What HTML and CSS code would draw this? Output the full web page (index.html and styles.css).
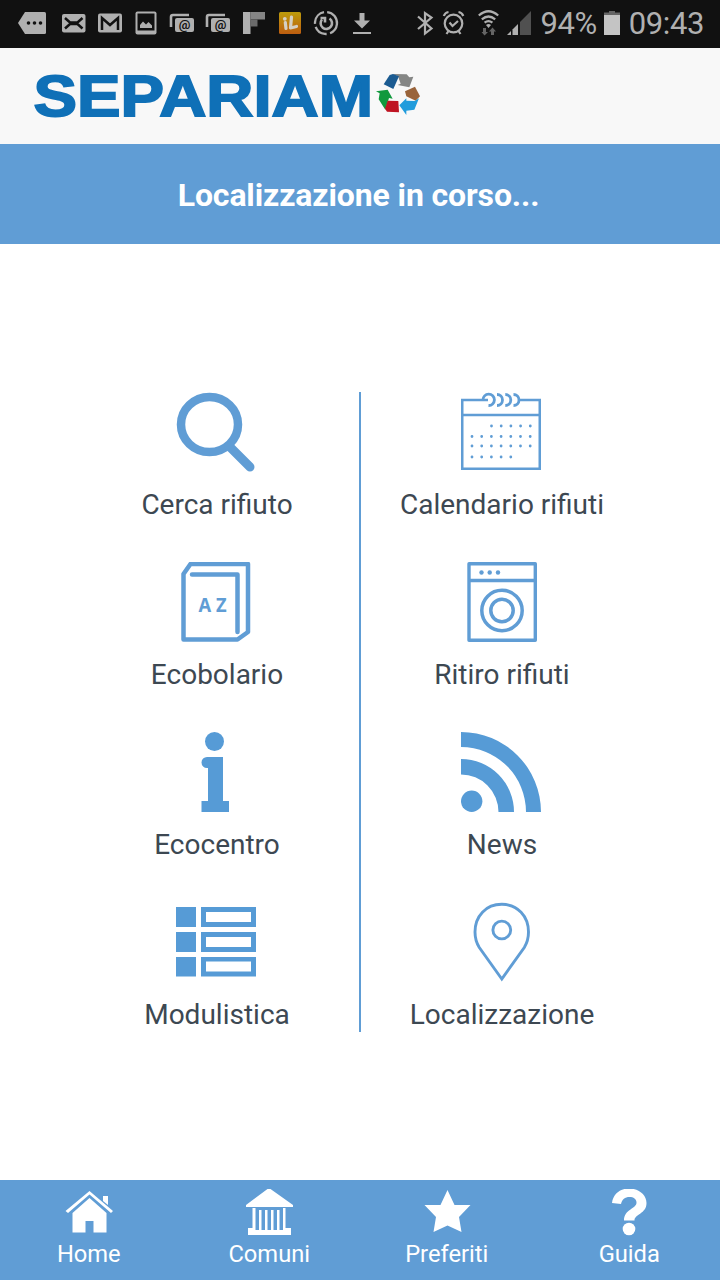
FILE: index.html
```html
<!DOCTYPE html>
<html lang="it">
<head>
  <meta charset="UTF-8" />
  <meta name="viewport" content="width=device-width, initial-scale=1.0" />
  <title>Separiamo</title>
  <link rel="stylesheet" href="styles.css">
</head>
<body>
  <div class="status-bar">
    <div class="notifications">
      <svg viewBox="0 0 36 48"><path d="M5 12H24.500Q26 12 26 13.500V32.500Q26 34 24.500 34H5L-2 23Z"/><g class="dark"><circle cx="8.500" cy="23" r="1.800"/><circle cx="14.500" cy="23" r="1.800"/><circle cx="20.500" cy="23" r="1.800"/></g></svg>
      <svg viewBox="0 0 36 48"><rect x="6" y="14" width="23.500" height="18.500" rx="2"/><path class="dark-line" d="M9 18L14 22.500H21.500L26.500 18M9 28.500L14 24H21.500L26.500 28.500"/></svg>
      <svg viewBox="0 0 36 48"><rect x="6" y="13.500" width="24" height="19" rx="2"/><path class="dark-line" d="M10 30V18L18 25L26 18V30"/></svg>
      <svg viewBox="0 0 36 48"><rect x="7.500" y="11.500" width="21" height="23" rx="2"/><rect class="dark" x="9.500" y="13.500" width="17" height="17"/><path d="M12 28V25L15 21.500L18 24.500L20.500 22L24 25.500V28Z"/></svg>
      <svg viewBox="0 0 36 48"><path class="line" d="M7 27V17Q7 15 9 15H25"/><rect x="11" y="18" width="19" height="14" rx="2"/><text class="at" x="20.500" y="29">@</text></svg>
      <svg viewBox="0 0 36 48"><path class="line" d="M7 27V17Q7 15 9 15H25"/><rect x="11" y="18" width="19" height="14" rx="2"/><text class="at" x="20.500" y="29">@</text></svg>
      <svg viewBox="0 0 36 48"><path d="M7 12H14.500V34H7Z"/><path fill="#858585" d="M14.500 12H29V19.500H14.500Z"/><path fill="#6b6b6b" d="M14.500 19.500H21.500V26.500H14.500Z"/></svg>
      <svg viewBox="0 0 36 48">
        <defs><linearGradient id="gold" x2="0" y2="1"><stop stop-color="#bd9c0c"/><stop offset="1" stop-color="#bd5d10"/></linearGradient></defs>
        <rect x="7" y="12" width="22" height="22" rx="1.500" fill="url(#gold)"/>
        <path class="il" d="M13.300 22.500L14 28.500M19.500 17L18.500 28L24.500 26.500"/><circle cx="12.800" cy="18.800" r="1.900" fill="#d5d0c5"/>
      </svg>
      <svg viewBox="0 0 36 48"><circle class="line thin" cx="18" cy="23" r="11" stroke-dasharray="29 3.500 14 3 16 3.620" transform="rotate(-84 18 23)"/><path class="line" d="M21.500 18.500A5.700 5.700 0 1 1 14 19.500M12.500 18H17V22.500"/></svg>
      <svg viewBox="0 0 36 48"><path d="M15.500 13H20.500V20.500H26L18 28.500L10 20.500H15.500ZM9 32H27V34H9Z"/></svg>
    </div>
    <div class="system">
      <svg class="bluetooth" viewBox="0 0 16 48"><path class="line mid" d="M1 16.500L14.500 28.500L8 33.500V13L14.500 17.500L1 29"/></svg>
      <svg class="alarm" viewBox="0 0 22 48"><circle class="line mid" cx="10.500" cy="23.500" r="8.800"/><path class="line mid" d="M6.500 22.500L9.500 26L15 21M0.800 16Q2 12.500 5.500 12M15.500 12Q19 12.500 20.300 16M5.500 31L3.500 34M15.500 31L17.500 34"/></svg>
      <svg class="wifi" viewBox="0 0 22 48"><path class="line mid" d="M.8 15.500Q10.500 7 20.200 15.500M3.800 19.300Q10.500 13.700 17.200 19.300M6.600 22.700Q10.500 19.500 14.400 22.700"/><path d="M8 25Q10.500 23 13 25L10.500 28Z"/><path fill="#656565" d="M5 28H8V32H10L6.500 35.500L3.500 32H5ZM13 35V31.500H11L14.500 27.500L18 31.500H16V35Z"/></svg>
      <svg class="signal" viewBox="0 0 24 48"><path d="M0 35L4 31V35Z"/><path d="M5.500 35V29.500L11 24V35Z"/><path fill="#505050" d="M13 35V22L24 11V35Z"/></svg>
      <span class="percent">94%</span>
      <svg class="battery" viewBox="0 0 16 48"><path fill="#656565" d="M5 11H11V12.500H16V15H0V12.500H5Z"/><path fill="#c4c4c4" d="M0 15H16V35H0Z"/></svg>
      <span>09:43</span>
    </div>
  </div>

  <header class="header">
    <svg class="logo" viewBox="0 0 390 70" role="img" aria-label="Separiamo">
      <text class="logo-text" x="3.500" y="51" textLength="339.500" lengthAdjust="spacingAndGlyphs">SEPARIAM</text>
      <g transform="translate(335 -1) scale(.3333)">
        <path fill="#858685" d="M82 30L125 31L133 40L145 38L133 70L98 63L107 59L99 37Z"/>
        <path fill="#1b5b91" d="M74 33L84 30L102 37L85 75L56 61Z"/>
        <path fill="#99643b" d="M120 82L150 68L165 97L152 110L124 97Z"/>
        <path fill="#219cdc" d="M103 124L124 103V110L149 111L162 103L148 137L124 140V153Z"/>
        <path fill="#11993d" d="M33 82L68 77L83 104L72 102L61 137L41 106L44 88Z"/>
        <path fill="#bf1422" d="M68 110L100 111L102 145L66 143L60 134Z"/>
      </g>
    </svg>
  </header>

  <div class="banner">Localizzazione in corso...</div>

  <main class="menu">
    <div class="column left">
      <a class="item">
        <svg class="icon" viewBox="0 0 80 80"><ellipse cx="33.500" cy="32.500" rx="28.500" ry="27.500" stroke-width="8.500"/><path d="M53 54L74 75" stroke-width="9" stroke-linecap="round"/></svg>
        <span>Cerca rifiuto</span>
      </a>
      <a class="item">
        <svg class="icon" viewBox="0 0 80 80"><path d="M14.500 2H72V70L61.500 77.500H7.500V12Z" stroke-width="4.500" stroke-linejoin="round"/><path d="M16 12.500H61.500V70" stroke-width="4.500" stroke-linecap="round" stroke-linejoin="round"/><text class="az" x="22.500" y="50" textLength="28" lengthAdjust="spacingAndGlyphs">A Z</text></svg>
        <span>Ecobolario</span>
      </a>
      <a class="item">
        <svg class="icon solid" viewBox="0 0 80 80"><circle cx="38.500" cy="9.500" r="9.500"/><path d="M31 25H47V69H53V80H25.500V69H32V36H31A5.500 5.500 0 0 1 31 25Z"/></svg>
        <span>Ecocentro</span>
      </a>
      <a class="item">
        <svg class="icon solid" viewBox="0 0 80 80"><path d="M0 5H20V25H0ZM0 30H20V50H0ZM0 55H20V74.500H0Z"/><g fill-rule="evenodd"><path d="M25 5H80V25H25ZM30 10V20H75V10Z"/><path d="M25 30H80V50H25ZM30 35V45H75V35Z"/><path d="M25 55H80V74.500H25ZM30 59.500V69.500H75V59.500Z"/></g></svg>
        <span>Modulistica</span>
      </a>
    </div>
    <div class="column right">
      <a class="item">
        <svg class="icon" viewBox="0 0 80 80">
          <path d="M22 8H1.200V76.800H78.800V8H58M1 23H79M22 8H27" stroke-width="2.600"/>
          <path d="M22 8A5.700 5.700 0 1 1 27.500 13.500M36 2.500A5.500 5.500 0 1 1 36 13.500M44.300 2.500A5.500 5.500 0 1 1 44.300 13.500M52.500 2.500A5.500 5.500 0 1 1 52.500 13.500" stroke-width="2.800"/>
          <path class="dots" d="M30.500 34H71M11 44.500H71M11 54H71M11 65H51"/>
        </svg>
        <span>Calendario rifiuti</span>
      </a>
      <a class="item">
        <svg class="icon" viewBox="0 0 80 80"><path d="M8 1.700H74.300V78.300H8ZM8 18.500H74" stroke-width="3.400" stroke-linejoin="round"/><circle cx="41" cy="48.500" r="20.200" stroke-width="3.500"/><circle cx="41" cy="48.500" r="11.200" stroke-width="3.500"/><g class="fill"><circle cx="20.500" cy="10.500" r="2.200"/><circle cx="28.700" cy="10.500" r="2.200"/><circle cx="37" cy="10.500" r="2.200"/></g></svg>
        <span>Ritiro rifiuti</span>
      </a>
      <a class="item">
        <svg class="icon solid" viewBox="0 0 80 80"><circle cx="10.700" cy="69.300" r="10.700"/><path d="M0 0A80 80 0 0 1 80 80H65A65 65 0 0 0 0 15ZM0 27A53 53 0 0 1 53 80H37.500A37.500 37.500 0 0 0 0 42.500Z"/></svg>
        <span>News</span>
      </a>
      <a class="item">
        <svg class="icon" viewBox="0 0 80 80"><path d="M40.800 77L18.300 45.500C15.500 41 14 36 14 30C14 14 25 2.300 40.800 2.300S67.500 14 67.500 30C67.500 36 66 41 63.300 45.500Z" stroke-width="2.900"/><circle cx="40.800" cy="28" r="8.900" stroke-width="2.900"/></svg>
        <span>Localizzazione</span>
      </a>
    </div>
  </main>

  <nav class="tab-bar">
    <a class="tab">
      <svg viewBox="0 0 48 48"><path d="M24.500 2L48 22L46 24L24.500 5.500L3 24L.500 22ZM38 7H43V16L38 12ZM24.500 9L41.500 24V43.500H28.500V32H20.500V43.500H7.500V24Z"/></svg>
      <span>Home</span>
    </a>
    <a class="tab">
      <svg viewBox="0 0 48 48"><path d="M22.500 0H25.500L48 16V18H1V16ZM3 39H7.500V19H10.500V41H14V21H16.500V41H20V21H22.500V41H26V21H28.500V41H32V21H34.500V41H38V19H40.500V39H46V46H3Z"/></svg>
      <span>Comuni</span>
    </a>
    <a class="tab">
      <svg viewBox="0 0 48 48"><path d="M24.500 1L31.500 16H47.500L36 28L38.500 43L24.500 36.500L10.500 43L13 28L1.500 16H17.500Z"/></svg>
      <span>Preferiti</span>
    </a>
    <a class="tab">
      <svg viewBox="0 0 48 48"><path d="M7 14C8 5 15-.500 24-.500C34-.500 41.500 6 41.500 14C41.500 25 29.500 25 29.500 31.500H19C19 20 31.500 20 31.500 13.500C31.500 10 28.500 8 24.500 8C20 8 17 10.500 16 15Z"/><circle cx="24" cy="40" r="6.300"/></svg>
      <span>Guida</span>
    </a>
  </nav>
</body>
</html>
```

FILE: styles.css
```css
* {
  box-sizing: border-box;
}
body {
  margin: 0;
  height: 1280px;
  display: flex;
  flex-direction: column;
  background: #fff;
  color: #3d4852;
  font-family: Roboto, sans-serif;
}

/* status bar */
.status-bar {
  height: 48px;
  display: flex;
  justify-content: space-between;
  padding: 0 16px 0 20px;
  background: #111;
  color: #b0b0b0;
  font-size: 31px;
  letter-spacing: -0.4px;
  line-height: 48px;
}
.status-bar svg {
  height: 48px;
  fill: #b0b0b0;
  overflow: visible;
  flex: none;
}
.notifications, .system {
  display: flex;
}
.notifications svg {
  width: 36px;
}
.status-bar .dark {
  fill: #111;
}
.status-bar .dark-line {
  fill: none;
  stroke: #111;
  stroke-width: 2.5;
}
.status-bar .line {
  fill: none;
  stroke: #b0b0b0;
  stroke-width: 2.6;
}
.status-bar .thin {
  stroke-width: 2.3;
}
.status-bar .mid {
  stroke-width: 2.2;
}
.at {
  fill: #111;
  font-size: 13px;
  font-weight: bold;
  letter-spacing: 0;
  text-anchor: middle;
}
.il {
  fill: none;
  stroke: #d5d0c5;
  stroke-width: 3.2;
  stroke-linecap: round;
  stroke-linejoin: round;
}
.bluetooth {
  width: 16px;
  margin-right: 10px;
}
.alarm {
  width: 22px;
  margin-right: 13px;
}
.wifi {
  width: 22px;
  margin-right: 7px;
}
.signal {
  width: 24px;
  margin-right: 9px;
}
.battery {
  width: 16px;
  margin: 0 9px 0 7px;
}

/* header */
.header {
  height: 96px;
  padding: 17px 30px 0;
  background: #f8f8f8;
}
.logo {
  display: block;
  width: 390px;
  height: 70px;
}
.logo-text {
  font-family: "Liberation Sans", Arial, sans-serif;
  font-size: 58px;
  font-weight: bold;
  fill: #0f70b7;
  stroke: #0f70b7;
  stroke-width: 1.8;
}
.banner {
  height: 100px;
  padding-right: 3px;
  background: #609dd5;
  color: #fff;
  font-size: 32px;
  font-weight: bold;
  letter-spacing: -0.13px;
  line-height: 102px;
  text-align: center;
}

/* menu */
.menu {
  flex: 1;
  display: flex;
  align-items: flex-start;
  padding: 148px 0 0 75px;
}
.column {
  height: 640px;
  display: flex;
  flex-direction: column;
  gap: 40px;
}
.left {
  width: 286px;
  border-right: 2px solid #609dd5;
}
.right {
  width: 282px;
}
.item {
  height: 130px;
  display: flex;
  flex-direction: column;
  align-items: center;
  font-size: 28px;
  line-height: 33px;
}
.item span {
  margin-top: 16px;
}
.icon {
  width: 80px;
  height: 80px;
  margin-right: 2px;
  fill: none;
  stroke: #609dd5;
}
.icon.solid {
  fill: #569bd6;
  stroke: none;
}
.fill {
  fill: #609dd5;
  stroke: none;
}
.az {
  fill: #609dd5;
  stroke: none;
  font-family: "Noto Sans", sans-serif;
  font-size: 20px;
  font-weight: bold;
}
.dots {
  stroke-width: 2.8;
  stroke-linecap: round;
  stroke-dasharray: 0 9.7;
}

/* bottom navigation */
.tab-bar {
  height: 100px;
  display: flex;
  padding: 9px 2px 0 0;
  background: #609dd5;
  color: #fff;
}
.tab {
  flex: 1 1 0;
  display: flex;
  flex-direction: column;
  align-items: center;
  font-size: 23.7px;
  line-height: 28px;
}
.tab:nth-child(odd) {
  padding-right: 3px;
}
.tab:last-child {
  padding-left: 2px;
}
.tab svg {
  width: 48px;
  height: 48px;
  margin-bottom: 3px;
  fill: #fff;
}
```
